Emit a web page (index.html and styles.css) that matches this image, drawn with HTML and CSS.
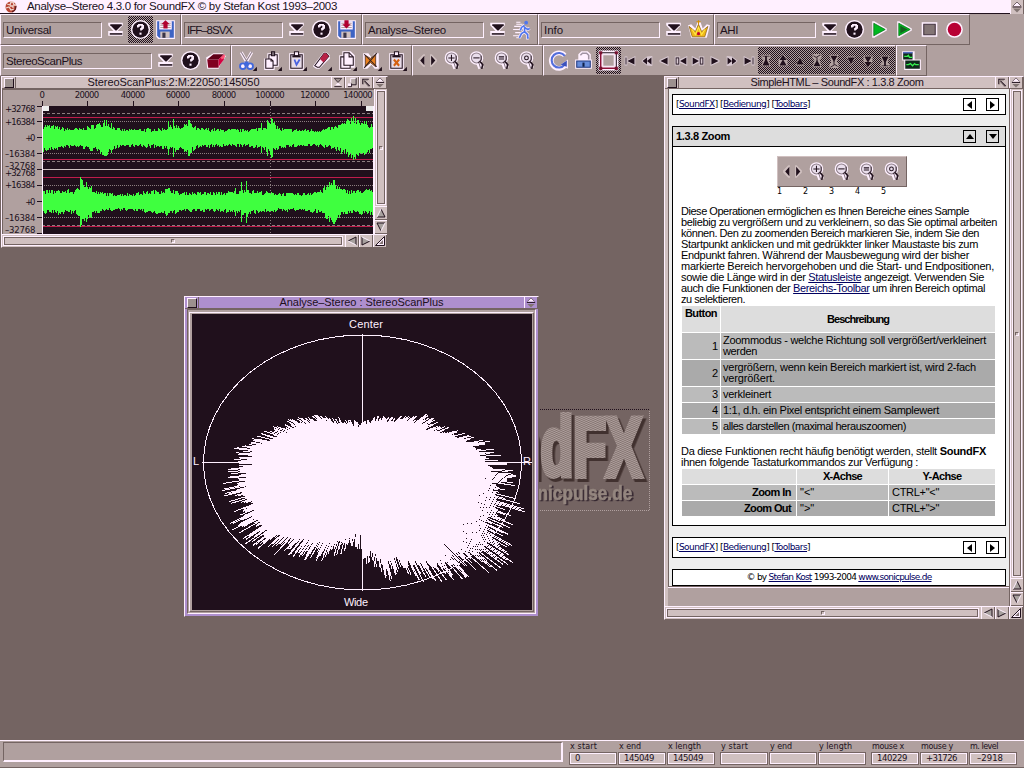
FILE: index.html
```html
<!DOCTYPE html>
<html lang="de">
<head>
<meta charset="utf-8">
<title>SoundFX</title>
<link rel="stylesheet" href="styles.css">
</head>
<body>
<svg class="defs" width="0" height="0">
<defs>
<pattern id="dots" width="2" height="2" patternUnits="userSpaceOnUse"><rect width="2" height="2" fill="#83746f"/><rect width="1" height="1" fill="#b0a09f"/><rect x="1" y="1" width="1" height="1" fill="#b0a09f"/></pattern>
</defs>
<symbol id="dd" viewBox="0 0 24 24"><path d="M5 5.500h14v2.500l-5 5.500h5v4.500h-14v-4.500h5l-5-5.500z" fill="#fff0ff"/><path d="M7 7h11v1l-5 5h-1L7 8z" fill="#20101c"/><path d="M6.500 15.500h12v1.500h-12z" fill="#20101c"/></symbol>
<symbol id="help" viewBox="0 0 24 24"><circle cx="12" cy="12" r="9.200" fill="#fff0ff"/><circle cx="12" cy="12" r="7.800" fill="#20101c"/><path d="M9.500 10V8.500h1V7.500h3v1h1v2h-1v1h-1v1.500" fill="none" stroke="#fff0ff" stroke-width="1.700"/><path d="M11 15h2v2h-2z" fill="#fff0ff"/></symbol>
<symbol id="disk" viewBox="0 0 24 24"><path d="M3 3h18v18H5l-2-2z" fill="#fff0ff"/><path d="M4 4h16v16H6l-2-2z" fill="#3d63c4"/><path d="M6 4h12v8H6z" fill="#fff0ff"/><path d="M7 6h10M7 8h10M7 10h10" stroke="#b0a09f"/><path d="M7 14h9v6H7z" fill="#d0c0c0"/><path d="M9 15h3v5H9z" fill="#3a3448"/></symbol>
<symbol id="save" viewBox="0 0 24 24"><use href="#disk"/><path d="M12 3l4 4h-2v4h-4V7H8z" fill="#b00030"/></symbol>
<symbol id="load" viewBox="0 0 24 24"><use href="#disk"/><path d="M12 11l4-4h-2V3h-4v4H8z" fill="#b00030"/></symbol>
<symbol id="run" viewBox="0 0 24 24"><path d="M6 7h6M4 9h6M3 12h7M5 15h5M3 18h6M6 20h4M6 5h4" stroke="#fff0ff"/><path d="M14 8l-3 2-1 3M14 9v5l3 3v3h1M14 14l-3 2-2 4M14 10l3 2 2-1" fill="none" stroke="#fff0ff" stroke-width="3"/><path d="M14 8l-3 2-1 3M14 9v5l3 3v3h1M14 14l-3 2-2 4M14 10l3 2 2-1" fill="none" stroke="#4f76ee" stroke-width="1.600"/><circle cx="15.500" cy="5.500" r="1.800" fill="#4f76ee"/></symbol>
<symbol id="crown" viewBox="0 0 24 24"><path d="M2 8l3-1 4 4 2-6h3l2 6 4-4 3 1-3 12H5z" fill="#fff0ff"/><path d="M3 9l6 5 3-7 3 7 6-5-3 10H6z" fill="#f0b818" stroke="#8a6010" stroke-width=".7"/><path d="M6 12l3 5 3-7 3 7 3-5" fill="none" stroke="#ffe84a"/><circle cx="12" cy="16" r="1.500" fill="#c00030"/><path d="M12 3v4M10 4.500h4" stroke="#d89000"/></symbol>
<symbol id="play" viewBox="0 0 24 24"><path d="M5 4h2l12 7v2L7 20H5z" fill="#fff0ff"/><path d="M6.500 6L17.500 12 6.500 18z" fill="#00b820" stroke="#007010" stroke-width=".7"/></symbol>
<symbol id="playsel" viewBox="0 0 24 24"><use href="#play"/><path d="M8 8.500l7 3.500-7 3.500z" fill="#146020"/></symbol>
<symbol id="stop" viewBox="0 0 24 24"><path d="M4.500 5h15v14h-15z" fill="#fff0ff"/><path d="M6.500 7h11v10h-11z" fill="#837575" stroke="#40303c"/></symbol>
<symbol id="rec" viewBox="0 0 24 24"><circle cx="12" cy="12" r="8" fill="#fff0ff"/><circle cx="12" cy="12" r="6.500" fill="#b80034"/></symbol>
<symbol id="box" viewBox="0 0 24 24"><path d="M3 9l7-4h9l3 3-5 7-2 5H4z" fill="#fff0ff"/><path d="M4 11h11v8H5z" fill="#800020"/><path d="M4 11l6-5h10l-5 5z" fill="#600018"/><path d="M15 11l5-5v5l-5 7z" fill="#d40040"/><path d="M17 9l4-3v3l-3 2z" fill="#ff5878"/></symbol>
<symbol id="corner" viewBox="0 0 24 24"><path d="M22 18v4h-4z" fill="#20101c"/></symbol>
<symbol id="cut" viewBox="0 0 24 24"><path d="M7 4l6 11M17 4l-6 11" stroke="#fff0ff" stroke-width="3"/><path d="M7 4l6 10M17 4l-6 10" stroke="#8b7d88"/><circle cx="8.500" cy="17.500" r="2.700" fill="#fff0ff" stroke="#4168dc" stroke-width="1.800"/><circle cx="15.500" cy="17.500" r="2.700" fill="#fff0ff" stroke="#4168dc" stroke-width="1.800"/><path d="M10 13h4v4h-4z" fill="#4168dc"/><use href="#corner"/></symbol>
<symbol id="copy" viewBox="0 0 24 24"><path d="M8 5h11v13h-4v3H5V10h3z" fill="#fff0ff"/><path d="M9.500 6.500h8v10h-8z" fill="#fff0ff" stroke="#20101c"/><path d="M12 3.500h3v4h-3z" fill="#776a74" stroke="#20101c"/><path d="M6.500 10.500h5l2 2v7h-7z" fill="#fff0ff" stroke="#20101c"/><path d="M11.500 10.500v2h2" fill="none" stroke="#20101c"/><use href="#corner"/></symbol>
<symbol id="clip" viewBox="0 0 24 24"><path d="M5 5h14v16H5z" fill="#fff0ff"/><path d="M6.500 6.500h11v13h-11z" fill="#e8dce8" stroke="#20101c"/><path d="M10 3.500h4v4h-4z" fill="#fff0ff" stroke="#20101c"/><path d="M8 8h8" stroke="#20101c" stroke-width="2"/></symbol>
<symbol id="paste" viewBox="0 0 24 24"><use href="#clip"/><path d="M10 11l2 5 3-5" fill="none" stroke="#4a62e0" stroke-width="1.700"/><use href="#corner"/></symbol>
<symbol id="rub" viewBox="0 0 24 24"><path d="M4 17L14 4h3l3 3v3L10 20H7l-3-2z" fill="#fff0ff"/><path d="M5.500 17L14.500 5h2l2.500 3-9 10.500H8z" fill="#fff0ff" stroke="#20101c"/><path d="M14.500 5h2l2.500 3-5 6-3.500-3.500z" fill="#b82045"/><use href="#corner"/></symbol>
<symbol id="newdoc" viewBox="0 0 24 24"><path d="M8 3h8l4 4v12h-4v2H5V7h3z" fill="#fff0ff"/><path d="M9.500 4.500h5l4 4v8h-9z" fill="#fff0ff" stroke="#20101c"/><path d="M9.500 8.500h-3v11h9v-3" fill="none" stroke="#20101c"/><path d="M14.500 4.500v4h4" fill="none" stroke="#20101c"/><use href="#corner"/></symbol>
<symbol id="del" viewBox="0 0 24 24"><path d="M4 5h5l3 4 3-4h4v15h-4l-3-4-4 4H4z" fill="#fff0ff"/><path d="M6 7l5 3 5-4v12l-5-4-5 4z" fill="#e88020" stroke="#402010" stroke-width=".7"/><path d="M5 6l12 12M17 5L5 19" stroke="#302020"/><use href="#corner"/></symbol>
<symbol id="clipx" viewBox="0 0 24 24"><use href="#clip"/><path d="M9.500 11l5 6M14.500 11l-5 6" stroke="#d46010" stroke-width="2"/><use href="#corner"/></symbol>
<symbol id="lr" viewBox="0 0 24 24"><path d="M9.500 6v12H8l-5-5v-2l5-5zM14.500 6v12H16l5-5v-2l-5-5z" fill="#d0c0c0"/><path d="M9 7.500v9L5 12zM15.500 7.500v9l4-4.500z" fill="#20101c"/></symbol>
<symbol id="glass" viewBox="0 0 24 24"><circle cx="11" cy="9.500" r="6.500" fill="#fff0ff"/><path d="M13 13l2.500 6.500" stroke="#fff0ff" stroke-width="5.500"/><circle cx="11" cy="9.500" r="4.800" fill="#eadeec" stroke="#8a7b86"/><path d="M15.500 7.500v4l-3 3" fill="none" stroke="#40303c"/><path d="M14.500 13l2.500 3-1 4" fill="none" stroke="#20101c" stroke-width="1.600"/><path d="M13.500 14.500l1.500 5" stroke="#8a7b86"/></symbol>
<symbol id="zin" viewBox="0 0 24 24"><use href="#glass"/><path d="M8 9.500h6M11 6.500v6" stroke="#20101c"/></symbol>
<symbol id="zout" viewBox="0 0 24 24"><use href="#glass"/><path d="M8 9.500h6" stroke="#20101c"/></symbol>
<symbol id="zeq" viewBox="0 0 24 24"><use href="#glass"/><path d="M8.500 8.500h5M8.500 10.500h5" stroke="#20101c"/></symbol>
<symbol id="zall" viewBox="0 0 24 24"><use href="#glass"/><circle cx="11" cy="9.500" r="1.800" fill="none" stroke="#20101c"/></symbol>
<symbol id="loop" viewBox="0 0 24 24"><path d="M18 7a7.500 7.500 0 1 0 1 9" fill="none" stroke="#fff0ff" stroke-width="4.500"/><path d="M21 11v9l-7-4z" fill="#fff0ff"/><path d="M18 7.500a7 7 0 1 0 0 8.500" fill="none" stroke="#536edb" stroke-width="2"/><path d="M20 12v6l-6-2z" fill="#3d52bc"/></symbol>
<symbol id="lock" viewBox="0 0 24 24"><path d="M4 11h3V6l3-3h6l3 3v5h1v9H4z" fill="#fff0ff"/><path d="M9 7l2-2h4l2 2v4" fill="none" stroke="#a193a3" stroke-width="1.500"/><path d="M5.500 12.500h13v6h-13z" fill="#668cda" stroke="#203a80"/><path d="M11 14h2v4h-2z" fill="#102048"/></symbol>
<symbol id="frame" viewBox="0 0 24 24"><path d="M4.500 4.500h15v15h-15z" fill="#b0a09f" stroke="#fff0ff" stroke-width="4"/><path d="M6.500 6.500h11v11h-11z" fill="#b0a09f" stroke="#fff0ff"/><path d="M4.500 4.500h15v15" fill="none" stroke="#20101c"/><path d="M4.500 4v15.500H19" fill="none" stroke="#8c1038" stroke-width="1.500"/><path d="M3 3h3v3H3zM18 3h3v3h-3zM3 18h3v3H3zM18 18h3v3h-3z" fill="#781030"/></symbol>
<symbol id="tri" viewBox="-1 -1 18 18"><path d="M3 7L13 2.500v11L3 9z" fill="#d8c9d2"/><path d="M4 8l8-4v8z" fill="#20101c"/></symbol>
<symbol id="dbl" viewBox="-1 -1 18 18"><path d="M2 7.500l6-4.500 6-.5v11l-6-.5-6-4.500z" fill="#d8c9d2"/><path d="M3 8l5-4v8zM8 8l5-4v8z" fill="#20101c"/></symbol>
<symbol id="first" viewBox="-1 -1 18 18"><path d="M2 3h3v4l9-4.500v11L5 9v4H2z" fill="#d8c9d2"/><path d="M5 8l8-4v8zM3 4h1v8H3z" fill="#20101c"/></symbol>
<symbol id="zero" viewBox="-1 -1 18 18"><path d="M1 3h6v3l8-3.500v11L7 10v3H1z" fill="#d8c9d2"/><path d="M7 8l7-4v8z" fill="#20101c"/><rect x="2.500" y="4.500" width="3" height="7" fill="none" stroke="#20101c"/></symbol>
<symbol id="up" viewBox="-1 -1 18 18"><path d="M8 3l5 10H3z" fill="#b0a09f"/><path d="M8 4l4 8H4z" fill="#20101c"/></symbol>
<symbol id="upup" viewBox="-1 -1 18 18"><path d="M8 0l5 7v7H3V7z" fill="#b0a09f"/><path d="M8 1l4 6H4zM8 6l4 7H4z" fill="#20101c"/></symbol>
<symbol id="uptop" viewBox="-1 -1 18 18"><path d="M3 1h10v4l-2 1 2 8H3l2-8-2-1z" fill="#b0a09f"/><path d="M4 2h8v1H4zM8 5l4 8H4zM7 3h2v4H7z" fill="#20101c"/></symbol>
<symbol id="upz" viewBox="-1 -1 18 18"><path d="M3 0h10v5l-2 1 2 9H3l2-8-2-2z" fill="#b0a09f"/><path d="M4 2l3 2 5-3M8 4v4" fill="none" stroke="#20101c"/><path d="M8 7l4 7H4z" fill="#20101c"/></symbol>
<symbol id="monitor" viewBox="0 0 24 24"><path d="M3 3h12v8h6v10H5v-9H3z" fill="#fff0ff"/><path d="M4 4h9v7H4zM6 12h14v8H6z" fill="#10281c"/><path d="M4 4.500h9" stroke="#526bc1" stroke-width="1.500"/><path d="M5 8h3l1-1 1 2h3M7 16h2l2-1 2 2 2-2 1 1h3" fill="none" stroke="#36f050" stroke-width="1.300"/></symbol>
<symbol id="depth" viewBox="0 0 12 12"><path d="M2 5l4-4 4 4z" fill="#fff0ff"/><path d="M2 5l4-4 4 4" fill="none" stroke="#54464c" stroke-width=".8"/><path d="M1.500 6h9" stroke="#20101c"/><path d="M2 7.500h8l-4 4z" fill="#827573"/></symbol>
<symbol id="arrow" viewBox="0 0 12 12"><path d="M6 2L2 10h8z" fill="#a7a09e"/><path d="M6 2l4 8H2" fill="none" stroke="#20101c"/><path d="M6 2L2 10" stroke="#fff0ff"/></symbol>
<symbol id="resize" viewBox="0 0 12 12"><path d="M1.500 10.500l9-9v9z" fill="#fff0ff" stroke="#20101c"/><path d="M5 9l4-4v4z" fill="#837575"/></symbol>
<symbol id="iconify" viewBox="0 0 12 12"><path d="M2.500 8V2.500H9M4 4l6 6" stroke="#20101c" fill="none" stroke-width="1.200"/><path d="M3.500 8V3.500H8M4 5l5 6" stroke="#8e817e" fill="none"/></symbol>
<symbol id="zoomgad" viewBox="0 0 12 12"><path d="M4.500 1.500h6v7h-6z" fill="#b9aead"/><path d="M10.500 1v7.500h-5" fill="none" stroke="#20101c"/><path d="M4.500 6V1.500H10" fill="none" stroke="#fff0ff"/><path d="M1.500 7h4v3.500h-4z" fill="#fff0ff"/><path d="M5.500 7v3.500h-4" fill="none" stroke="#20101c"/></symbol>
<symbol id="shrink" viewBox="0 0 12 12"><path d="M2 1.500h8L6 6z" fill="#9d908e" stroke="#20101c" stroke-width=".8"/><path d="M2 10.500h8" stroke="#20101c"/><path d="M6 6l3 3H3z" fill="#fff0ff"/></symbol>
</svg>

<div class="screen">
<header class="screenbar">
  <svg class="ball" viewBox="0 0 12 12"><circle cx="6" cy="6" r="5.500" fill="#b84432"/><path d="M2 3l3 1 1-3h2l1 3h2M1 7l3-1 2 3 3-1M5 5h3v2" stroke="#efd6cf" fill="none" stroke-width="1.300"/><path d="M7 11l3-2 1-4" stroke="#4b1820" fill="none"/></svg>
  <span class="screentitle" data-w="310">Analyse–Stereo 4.3.0 for SoundFX © by Stefan Kost 1993–2003</span>
  <span class="gad"><svg><use href="#depth"/></svg></span>
</header>

<div class="toolrow">
  <div class="group g180"><span class="field f99"><span data-w="45">Universal</span></span><svg class="ic"><use href="#dd"/></svg><svg class="ic on"><use href="#help"/></svg><svg class="ic"><use href="#save"/></svg></div>
  <div class="group g180"><span class="field f99"><span data-w="45">IFF–8SVX</span></span><svg class="ic"><use href="#dd"/></svg><svg class="ic"><use href="#help"/></svg><svg class="ic"><use href="#load"/></svg></div>
  <div class="group g176"><span class="field f119"><span data-w="78">Analyse–Stereo</span></span><svg class="ic"><use href="#dd"/></svg><svg class="ic"><use href="#run"/></svg></div>
  <div class="group g176"><span class="field f119"><span data-w="19">Info</span></span><svg class="ic"><use href="#dd"/></svg><svg class="ic"><use href="#crown"/></svg></div>
  <div class="group g256"><span class="field f99"><span data-w="18">AHI</span></span><svg class="ic"><use href="#dd"/></svg><svg class="ic"><use href="#help"/></svg><svg class="ic"><use href="#play"/></svg><svg class="ic"><use href="#playsel"/></svg><svg class="ic"><use href="#stop"/></svg><svg class="ic"><use href="#rec"/></svg></div>
</div>
<div class="toolrow">
  <div class="group g231"><span class="field f149"><span data-w="76">StereoScanPlus</span></span><svg class="ic"><use href="#dd"/></svg><svg class="ic"><use href="#help"/></svg><svg class="ic"><use href="#box"/></svg></div>
  <div class="group g181"><svg class="ic"><use href="#cut"/></svg><svg class="ic"><use href="#copy"/></svg><svg class="ic"><use href="#paste"/></svg><svg class="ic"><use href="#rub"/></svg><svg class="ic"><use href="#newdoc"/></svg><svg class="ic"><use href="#del"/></svg><svg class="ic"><use href="#clipx"/></svg></div>
  <div class="group g131"><svg class="ic"><use href="#lr"/></svg><svg class="ic"><use href="#zin"/></svg><svg class="ic"><use href="#zout"/></svg><svg class="ic"><use href="#zeq"/></svg><svg class="ic"><use href="#zall"/></svg></div>
  <div class="group g353"><svg class="ic"><use href="#loop"/></svg><svg class="ic"><use href="#lock"/></svg><svg class="ic on"><use href="#frame"/></svg>
    <div class="small"><svg><use href="#first"/></svg><svg><use href="#dbl"/></svg><svg><use href="#tri"/></svg><svg><use href="#zero"/></svg><svg class="flip"><use href="#zero"/></svg><svg class="flip"><use href="#tri"/></svg><svg class="flip"><use href="#dbl"/></svg><svg class="flip"><use href="#first"/></svg></div>
    <div class="small dither"><svg><use href="#uptop"/></svg><svg><use href="#upup"/></svg><svg><use href="#up"/></svg><svg><use href="#upz"/></svg><svg class="turn"><use href="#upz"/></svg><svg class="turn"><use href="#up"/></svg><svg class="turn"><use href="#upup"/></svg><svg class="turn"><use href="#uptop"/></svg></div>
  </div>
  <div class="group g31"><svg class="ic"><use href="#monitor"/></svg></div>
</div>

<main class="desktop">
  <svg class="logo" viewBox="374 408 277 104" font-family="Liberation Sans" font-weight="bold">
    <path d="M374 409.500h275" stroke="#20101c" stroke-dasharray="1 1"/><path d="M374 510.500h275.500V410" stroke="#b0a09f" fill="none" stroke-dasharray="1 1"/>
    <g class="big" transform="translate(0 476) scale(.64 1)" font-size="84" stroke-width="6">
      <text x="1003" text-anchor="end" fill="url(#dots)" stroke="url(#dots)">SoundFX</text>
    </g>
    <g class="sub" transform="translate(0 500) scale(.82 1)" font-size="21" stroke-width=".6">
      <text x="771" text-anchor="end" fill="#94867f" stroke="#94867f">www.sonicpulse.de</text>
    </g>
  </svg>

  <section class="window wave">
    <div class="titlebar"><span class="gad close"><i></i></span><h2><span data-w="172">StereoScanPlus:2:M:22050:145050</span></h2><span class="gad"><svg><use href="#shrink"/></svg></span><span class="gad"><svg><use href="#zoomgad"/></svg></span><span class="gad"><svg><use href="#iconify"/></svg></span><span class="gad"><svg><use href="#depth"/></svg></span></div>
    <div class="body">
      <svg id="wave" class="wavepane" viewBox="2 89 372 145"></svg>
      <div class="vbar"><div class="thumb"><b></b></div><span class="gad"><svg><use href="#arrow"/></svg></span><span class="gad"><svg class="turn"><use href="#arrow"/></svg></span></div>
    </div>
    <div class="hbar"><div class="thumb"><b></b></div><span class="gad"><svg class="left"><use href="#arrow"/></svg></span><span class="gad"><svg class="right"><use href="#arrow"/></svg></span><span class="gad"><svg><use href="#resize"/></svg></span></div>
  </section>

  <section class="window scan">
    <div class="titlebar"><span class="gad close"><i></i></span><h2><span data-w="164">Analyse–Stereo : StereoScanPlus</span></h2><span class="gad"><svg><use href="#depth"/></svg></span></div>
    <div class="scanframe"><div class="scaninner"><svg id="scan" class="scanpane" viewBox="192 314 340 296"></svg></div></div>
  </section>

  <section class="window help">
    <div class="titlebar"><span class="gad close"><i></i></span><h2><span data-w="173">SimpleHTML – SoundFX : 1.3.8 Zoom</span></h2><span class="gad"><svg><use href="#iconify"/></svg></span><span class="gad"><svg><use href="#depth"/></svg></span></div>
    <div class="body">
      <div class="side">
      <article class="page">
        <nav class="box nav"><span data-w="134">[<a>SoundFX</a>] [<a>Bedienung</a>] [<a>Toolbars</a>]</span><span class="btns"><i class="sq"><i class="tl"></i></i><i class="sq"><i class="tr"></i></i></span></nav>
        <div class="box topic">
          <div class="head"><b data-w="54">1.3.8 Zoom</b><span class="btns"><i class="sq"><i class="tu"></i></i><i class="sq"><i class="td"></i></i></span></div>
          <figure><div class="shot"><svg class="ic"><use href="#lr"/></svg><svg class="ic"><use href="#zin"/></svg><svg class="ic"><use href="#zout"/></svg><svg class="ic"><use href="#zeq"/></svg><svg class="ic"><use href="#zall"/></svg></div>
          <figcaption><span>1</span><span>2</span><span>3</span><span>4</span><span>5</span></figcaption></figure>
          <div class="text">
            <div><span data-w="288">Diese Operationen ermöglichen es Ihnen Bereiche eines Sample</span></div>
            <div><span data-w="316">beliebig zu vergrößern und zu verkleinern, so das Sie optimal arbeiten</span></div>
            <div><span data-w="298">können. Den zu zoomenden Bereich markieren Sie, indem Sie den</span></div>
            <div><span data-w="297">Startpunkt anklicken und mit gedrükkter linker Maustaste bis zum</span></div>
            <div><span data-w="288">Endpunkt fahren. Während der Mausbewegung wird der bisher</span></div>
            <div><span data-w="313">markierte Bereich hervorgehoben und die Start- und Endpositionen,</span></div>
            <div><span data-w="303">sowie die Länge wird in der <a>Statusleiste</a> angezeigt. Verwenden Sie</span></div>
            <div><span data-w="304">auch die Funktionen der <a>Bereichs-Toolbar</a> um ihren Bereich optimal</span></div>
            <div><span data-w="64">zu selektieren.</span></div>
          </div>
          <div class="table t1">
            <b class="c hd first"><span data-w="32">Button</span></b><b class="c hd"><span data-w="62">Beschreibung</span></b>
            <div class="c r">1</div><div class="c"><span data-w="263">Zoommodus - welche Richtung soll vergrößert/verkleinert</span><br><span data-w="34">werden</span></div>
            <div class="c r k">2</div><div class="c k"><span data-w="253">vergrößern, wenn kein Bereich markiert ist, wird 2-fach</span><br><span data-w="52">vergrößert.</span></div>
            <div class="c r">3</div><div class="c"><span data-w="48">verkleinert</span></div>
            <div class="c r k">4</div><div class="c k"><span data-w="216">1:1, d.h. ein Pixel entspricht einem Samplewert</span></div>
            <div class="c r">5</div><div class="c"><span data-w="183">alles darstellen (maximal herauszoomen)</span></div>
          </div>
          <div class="text second">
            <div><span data-w="305">Da diese Funktionen recht häufig benötigt werden, stellt <b>SoundFX</b></span></div>
            <div><span data-w="237">ihnen folgende Tastaturkommandos zur Verfügung :</span></div>
          </div>
          <div class="table t2">
            <b class="c hd"></b><b class="c hd"><span data-w="39">X-Achse</span></b><b class="c hd"><span data-w="39">Y-Achse</span></b>
            <b class="c r"><span data-w="39">Zoom In</span></b><div class="c">"&lt;"</div><div class="c"><span data-w="47">CTRL+"&lt;"</span></div>
            <b class="c r k"><span data-w="47">Zoom Out</span></b><div class="c k">"&gt;"</div><div class="c k"><span data-w="47">CTRL+"&gt;"</span></div>
          </div>
        </div>
        <nav class="box nav"><span data-w="134">[<a>SoundFX</a>] [<a>Bedienung</a>] [<a>Toolbars</a>]</span><span class="btns"><i class="sq"><i class="tl"></i></i><i class="sq"><i class="tr"></i></i></span></nav>
        <footer class="box foot"><span data-w="185">© by <a>Stefan Kost</a> 1993-2004 <a>www.sonicpulse.de</a></span></footer>
      </article>
      <div class="under"></div>
      </div>
      <div class="vbar"><div class="thumb"><b></b></div><span class="gad"><svg><use href="#arrow"/></svg></span><span class="gad"><svg class="turn"><use href="#arrow"/></svg></span></div>
    </div>
    <div class="hbar"><div class="thumb"><b></b></div><span class="gad"><svg class="left"><use href="#arrow"/></svg></span><span class="gad"><svg class="right"><use href="#arrow"/></svg></span><span class="gad"><svg><use href="#resize"/></svg></span></div>
  </section>
</main>

<footer class="status">
  <div class="message"></div>
  <div class="trio"><div class="cell"><span data-w="27">x start</span><div><span>0</span></div></div><div class="cell"><span data-w="22">x end</span><div><span data-w="30">145049</span></div></div><div class="cell"><span data-w="33">x length</span><div><span data-w="30">145049</span></div></div></div>
  <div class="trio"><div class="cell"><span data-w="27">y start</span><div></div></div><div class="cell"><span data-w="22">y end</span><div></div></div><div class="cell"><span data-w="33">y length</span><div></div></div></div>
  <div class="trio"><div class="cell"><span data-w="32">mouse x</span><div><span data-w="30">140229</span></div></div><div class="cell"><span data-w="32">mouse y</span><div><span data-w="31">+31726</span></div></div><div class="cell"><span data-w="28">m. level</span><div class="neg"><span data-w="26">–2918</span></div></div></div>
</footer>
</div>
<script src="app.js"></script>
</body>
</html>
```

FILE: styles.css
```css
* { box-sizing: border-box; }
body { margin: 0; background: #746462; font: 11px/11px "Liberation Sans", sans-serif; color: #20101c; }
.defs { position: absolute; }
.screen { width: 1024px; height: 768px; overflow: hidden; display: flex; flex-direction: column; }
svg { display: block; flex: none; }
span[data-w], b[data-w] { display: inline-block; white-space: nowrap; }
h2 { margin: 0; font-size: 11px; font-weight: normal; line-height: 11px; flex: 1; text-align: center; white-space: nowrap; }

.screenbar { height: 14px; background: #fff0ff; border-bottom: 1px solid #20101c; display: flex; align-items: center; padding-left: 5px; }
.ball { width: 12px; height: 12px; margin-right: 10px; }
.screentitle { font-size: 11.500px; }
.screenbar .gad { margin-left: auto; height: 14px; align-self: flex-start; }

.toolrow { height: 31px; flex: none; display: flex; background: #b0a09f; }
.group { height: 31px; flex: none; display: flex; align-items: center; padding-left: 2px; border: 1px solid; border-color: #fff0ff #746462 #746462 #fff0ff; }
.g180 { width: 181px; } .g176 { width: 176px; } .g256 { width: 256px; } .g231 { width: 231px; }
.g181 { width: 181px; } .g131 { width: 131px; } .g353 { width: 353px; } .g31 { width: 31px; }
.field { height: 16px; padding: 1px 0 0 2px; margin-right: 1px; border: 1px solid; border-color: #746462 #fff0ff #fff0ff #746462; line-height: 12px; font-size: 11.500px; }
.f99 { width: 99px; } .f119 { width: 119px; } .f149 { width: 149px; }
.ic { width: 25px; height: 25px; }
.on { background: repeating-conic-gradient(#20101c 0 25%, #b0a09f 0 50%) 0 0 / 2px 2px; height: 27px; }
.small { display: flex; height: 27px; align-items: center; gap: 1px; padding-left: 1px; }
.small svg { width: 16px; height: 16px; }
.dither { padding-left: 0; margin-left: 1px; gap: 1px; width: 138px; background: repeating-conic-gradient(#20101c 0 25%, #b0a09f 0 50%) 0 0 / 2px 2px; }
.flip { transform: scaleX(-1); }
.turn { transform: rotate(180deg); }
.left { transform: rotate(-90deg); }
.right { transform: rotate(90deg); }

.desktop { flex: 1; border-top: 1px solid #746462; }
.logo { position: absolute; left: 374px; top: 408px; width: 277px; height: 104px; }
.big { filter: drop-shadow(4px 3px 0 #41312f); }
.sub { filter: drop-shadow(2px 1px 0 #352730); }
.window { position: absolute; display: flex; flex-direction: column; background: #d0c0c0; border: 1px solid; border-color: #fff0ff #746462 #746462 #fff0ff; }
.wave { left: 1px; top: 76px; width: 387px; height: 172px; }
.scan { left: 184px; top: 296px; width: 355px; height: 321px; background: #ae8fce; }
.help { left: 664px; top: 76px; width: 360px; height: 544px; }
.titlebar { height: 12px; flex: none; display: flex; border-bottom: 1px solid #746462; }
.gad { width: 14px; height: 13px; flex: none; border-left: 1px solid #fff0ff; border-right: 1px solid #746462; background: #d0c0c0; display: flex; align-items: center; justify-content: center; }
.gad svg { width: 12px; height: 12px; }
.titlebar .gad { height: 11px; }
.titlebar .gad svg { height: 11px; }
.scan .gad { background: #ae8fce; }
.gad.close { border-left: 0; }
.close i { width: 10px; height: 10px; background: #9c908e; border: 1px solid; border-color: #fff0ff #20101c #20101c #fff0ff; }
.body { flex: 1; display: flex; min-height: 0; }
.wavepane { width: 372px; height: 145px; }
.vbar { flex: 1; display: flex; flex-direction: column; border-left: 1px solid #fff0ff; }
.thumb { flex: 1; margin: 2px; border: 1px solid #746462; outline: 1px solid #fff0ff; display: flex; align-items: center; justify-content: center; }
.thumb b { width: 4px; height: 4px; border: 1px solid; border-color: #746462 #fff0ff #fff0ff #746462; }
.vbar .gad { height: 14px; width: auto; border: 0; border-top: 1px solid #fff0ff; border-bottom: 1px solid #746462; }
.hbar { height: 13px; flex: none; display: flex; border-top: 1px solid #fff0ff; }
.hbar .gad { height: 12px; }
.hbar .thumb { margin-right: 3px; }
.scanframe { flex: 1; margin: 0 2px 2px; border: 1px solid #746462; border-right-color: #fff0ff; border-bottom-color: #fff0ff; background: #b0a09f; padding: 2px 1px 1px; display: flex; }
.scaninner { flex: 1; border: 1px solid #fff0ff; border-right-color: #746462; border-bottom-color: #746462; padding: 1px 1px 1px 2px; background: #b0a09f; }
.scanpane { width: 340px; height: 296px; }

.side { width: 345px; flex: none; display: flex; flex-direction: column; padding-left: 3px; border-right: 1px solid #746462; }
.page { height: 498px; background: #eee; border-left: 1px solid #746462; border-bottom: 1px solid #746462; padding: 5px 4px 0 3px; color: #000; }
.under { flex: 1; background: #b0a09f; border-top: 1px solid #fff0ff; }
a { color: #000060; text-decoration: underline; }
.box { background: #fff; border: 1px solid #000; width: 334px; }
.nav { height: 21px; display: flex; align-items: center; justify-content: space-between; padding: 0 6px 0 3px; font: 9px/11px "DejaVu Sans", sans-serif; }
.btns { display: flex; gap: 10px; }
.sq { width: 13px; height: 13px; border: 1px solid #000; background: #fff; display: flex; align-items: center; justify-content: center; }
.head .sq { background: #ddd; }
.tl, .tr { border: 4px solid transparent; border-left-width: 0; border-right: 5px solid #000; }
.tr { transform: scaleX(-1); }
.tu, .td { border: 4px solid transparent; border-top-width: 0; border-bottom: 5px solid #000; }
.td { transform: scaleY(-1); }
.topic { height: 400px; margin: 11px 0; }
.head { height: 20px; background: #ddd; border-bottom: 1px solid #000; display: flex; align-items: center; justify-content: space-between; padding: 0 6px 0 3px; }
figure { margin: 9px 0 0 104px; width: 131px; height: 50px; }
.shot { width: 130px; height: 31px; background: #b0a09f; border: 1px solid; border-color: #d0c0c0 #746462 #746462 #d0c0c0; display: flex; align-items: center; padding-left: 2px; }
figcaption { display: flex; font: 8px/9px "DejaVu Sans", sans-serif; }
figcaption span { width: 26px; }
.text { padding-left: 8px; height: 99px; white-space: nowrap; }
.text div { height: 11px; }
.text.second { height: 22px; margin-top: 12px; }
.table { display: grid; gap: 1px; margin-left: 9px; width: 313px; }
.t1 { grid-template-columns: 38px 1fr; grid-template-rows: 26px 26px 26px 15px 15px 15px; margin-top: 1px; }
.t2 { grid-template-columns: 114px 91px 1fr; grid-template-rows: 15px 15px 15px; margin-top: 1px; }
.c { background: #bbb; padding: 0 2px; align-content: center; white-space: nowrap; }
.t2 .c { padding: 0 3px; }
.c.k { background: #aaa; }
.c.hd { background: #ddd; text-align: center; }
.c.first { align-content: start; padding-top: 2px; }
.c.r { text-align: right; }
.t2 .c.r { padding-right: 5px; }
.foot { height: 17px; margin-top: 11px; text-align: center; font: 9px/15px "DejaVu Sans", sans-serif; }

.status { height: 28px; flex: none; background: #b0a09f; border-top: 1px solid #fff0ff; border-bottom: 1px solid #746462; display: flex; padding-left: 3px; font: 8px/9px "DejaVu Sans", sans-serif; }
.message { width: 560px; height: 20px; margin: 1px 6px 0 0; border: 2px solid; border-width: 1px 2px 2px 1px; border-color: #746462 #fff0ff #fff0ff #746462; }
.trio { display: flex; gap: 1px; margin-right: 5px; padding-top: 1px; }
.cell { width: 48px; height: 23px; display: flex; flex-direction: column; }
.cell > span { height: 10px; margin-left: 1px; align-self: flex-start; }
.cell > div { height: 13px; background: #d0c0c0; border: 1px solid #746462; outline: 1px solid #fff0ff; outline-offset: -2px; padding: 1px 0 0 5px; font-size: 8.500px; line-height: 9px; }
.cell > .neg { padding-left: 7px; }
```

FILE: app.js
```js
// Fit single-line labels to their column widths.
document.querySelectorAll('[data-w]').forEach(function (el) {
  var natural = el.getBoundingClientRect().width;
  el.style.letterSpacing = ((el.dataset.w - natural) / el.textContent.length) + 'px';
});

var seed = 7;
function rnd() {
  seed = (seed * 16807) % 2147483647;
  return seed / 2147483647;
}
function lerp(points, x) {
  for (var i = 1; i < points.length; i++) {
    if (x <= points[i][0]) {
      var a = points[i - 1], b = points[i];
      return a[1] + (b[1] - a[1]) * (x - a[0]) / (b[0] - a[0]);
    }
  }
  return points[points.length - 1][1];
}

// Waveform pane
(function () {
  var s = '<rect x="2" y="89" width="372" height="145" fill="#b0a09f"/><path d="M2.500 234V89.500H374" stroke="#746462" fill="none"/>' +
    '<rect x="42" y="106" width="332" height="128" fill="#20101c"/>';
  var marks = [[0, 42, 42], [20000, 87, 87], [40000, 133, 133], [60000, 178, 178], [80000, 224, 224], [100000, 270, 270], [120000, 315, 315], [140000, 361, 358]];
  marks.forEach(function (m) {
    var w = String(m[0]).length * 4.900;
    s += '<text x="' + (m[2] - w / 2) + '" y="98" textLength="' + w + '">' + m[0] + '</text><path d="M' + (m[1] + .5) + ' 101v5" stroke="#20101c"/>';
  });
  [['+32768', 112], ['+16384', 125], ['+0', 141], ['–16384', 157], ['–32768', 169], ['+32768', 176], ['+16384', 188], ['+0', 205], ['–16384', 221], ['–32768', 233]].forEach(function (l) {
    var w = l[0].length * 5.100;
    s += '<text x="' + (35.500 - w) + '" y="' + l[1] + '" textLength="' + w + '">' + l[0] + '</text>';
  });
  [106, 121, 137, 153, 169, 185, 201, 217, 233].forEach(function (y) {
    s += '<path d="M37 ' + (y + .5) + 'h5" stroke="#20101c"/>';
  });
  function h(y, color, dash) {
    s += '<path d="M42 ' + (y + .5) + 'H373" stroke="' + color + '"' + (dash ? ' stroke-dasharray="' + dash + '"' : '') + '/>';
  }
  [117, 159, 177, 226].forEach(function (y) { h(y, '#c01c4c'); });
  [113, 161, 225].forEach(function (y) { h(y, '#8c7e80', '3 2'); });
  [121, 153, 185, 217].forEach(function (y) { h(y, '#8c7e80', '1 1'); });
  s += '<path d="M270.500 106V234" stroke="#8c7e80" stroke-dasharray="1 2"/>';
  var e1 = [[43, 13], [55, 11], [66, 9], [80, 9], [92, 12], [105, 16], [113, 11], [120, 8], [160, 9], [174, 13], [180, 10], [189, 14], [198, 9], [235, 8], [255, 9], [264, 12], [271, 16], [280, 9], [300, 8], [320, 8], [335, 11], [348, 17], [354, 20], [362, 16], [373, 13]];
  var e2 = [[43, 11], [75, 11], [79, 14], [81, 25], [86, 18], [94, 10], [110, 8], [130, 8], [155, 11], [169, 13], [180, 9], [215, 9], [239, 10], [245, 14], [250, 11], [270, 9], [300, 8], [320, 11], [333, 20], [341, 12], [355, 11], [373, 12]];
  var spikes1 = { 168: 17, 173: 19, 184: 14, 188: 18, 189: 18, 190: 15, 104: 18, 106: 18, 111: 15, 261: 15, 267: 18, 271: 20, 272: 19, 351: 20, 353: 22, 358: 18 };
  var spikes2 = { 80: 25, 81: 23, 86: 20, 91: 16, 241: 20, 246: 21, 235: 14, 329: 20, 333: 22, 334: 22 };
  [[e1, 138, spikes1], [e2, 202, spikes2]].forEach(function (c) {
    var d = '';
    for (var x = 43; x < 373; x++) {
      var e = lerp(c[0], x);
      var a = Math.max(6, c[2][x] || e * (.72 + .42 * rnd())), b = Math.max(6, c[2][x] || e * (.72 + .42 * rnd()));
      d += 'M' + (x + .5) + ' ' + Math.round(c[1] - a) + 'V' + Math.round(c[1] + b);
    }
    s += '<path d="' + d + '" stroke="#3fff3f"/>';
  });
  h(169, '#d0c0c0');
  s += '<path d="M42.500 106V234M373.500 106V234" stroke="#fff0ff"/><path d="M43 106h6v5h-6zM366 106h7v5h-7z" fill="#eee"/>';
  var el = document.getElementById('wave');
  el.setAttribute('font-family', 'DejaVu Sans');
  el.setAttribute('font-size', '8.500');
  el.setAttribute('fill', '#20101c');
  el.setAttribute('shape-rendering', 'crispEdges');
  el.innerHTML = s;
})();

// Stereo scan: radial spikes over an ellipse
(function () {
  var cx = 362, cy = 462;
  var tips = [[362, 422], [384, 416], [398, 416], [415, 416], [428, 414], [440, 423], [460, 428], [483, 434], [500, 449], [516, 466], [518, 480], [525, 499], [525, 521], [514, 540], [518, 561], [497, 571], [474, 582], [460, 587], [440, 582], [418, 582], [405, 576], [392, 584], [378, 572], [364, 564], [361, 550], [350, 548], [335, 559], [318, 562], [294, 558], [268, 554], [243, 545], [230, 532], [226, 512], [216, 490], [226, 476], [228, 464], [229, 452], [241, 443], [254, 436], [272, 426], [296, 416], [325, 416], [345, 419], [362, 422]];
  var list = tips.map(function (p, i) {
    var a = Math.atan2(p[0] - cx, cy - p[1]);
    if (a < 0) a += Math.PI * 2;
    if (i === tips.length - 1) a = Math.PI * 2;
    return [a, Math.hypot(p[0] - cx, p[1] - cy)];
  });
  var core = [], rays = '', n = 780;
  for (var i = 0; i < n; i++) {
    var a = i / n * Math.PI * 2, r = lerp(list, a);
    var k = a > 1.700 && a < 2.900 ? .62 : a > 3.300 && a < 4.600 ? .68 : .82;
    core.push((cx + Math.sin(a) * r * k).toFixed(1) + ',' + (cy - Math.cos(a) * r * k).toFixed(1));
    var low = Math.max(k, .8), q = r * (low + (1 - low) * Math.pow(rnd(), 1.300));
    rays += 'M' + cx + ' ' + cy + 'L' + (cx + Math.sin(a) * q).toFixed(1) + ' ' + (cy - Math.cos(a) * q).toFixed(1);
  }
  var el = document.getElementById('scan');
  el.setAttribute('shape-rendering', 'crispEdges');
  el.innerHTML = '<rect x="192" y="314" width="340" height="296" fill="#20101c"/>' +
    '<ellipse cx="362.500" cy="462.500" rx="159" ry="127.500" fill="none" stroke="#fff0ff"/>' +
    '<path d="M362.500 334V591M202 462.500H532" stroke="#fff0ff"/>' +
    '<polygon points="' + core.join(' ') + '" fill="#fff0ff"/><path d="' + rays + '" stroke="#fff0ff"/>' +
    '<g fill="#fff0ff" font-family="Liberation Sans" font-size="11"><text x="349" y="328" textLength="34">Center</text><text x="344" y="606" textLength="24">Wide</text><text x="193" y="465">L</text><text x="523" y="465">R</text></g>';
})();
```
